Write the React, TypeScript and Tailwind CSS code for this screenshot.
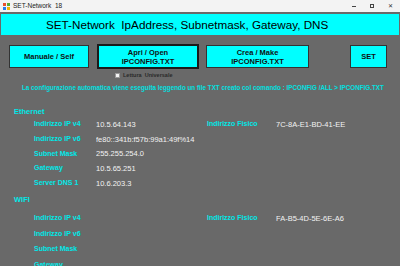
import React from "react";

const FONT = { fontFamily: '"Liberation Sans", Arial, sans-serif' };

type Row = { label: string; value?: string; macLabel?: string; mac?: string };

const ETH: Row[] = [
  { label: "Indirizzo IP v4", value: "10.5.64.143", macLabel: "Indirizzo Fisico", mac: "7C-8A-E1-BD-41-EE" },
  { label: "Indirizzo IP v6", value: "fe80::341b:f57b:99a1:49f%14" },
  { label: "Subnet Mask", value: "255.255.254.0" },
  { label: "Gateway", value: "10.5.65.251" },
  { label: "Server DNS 1", value: "10.6.203.3" },
];

const WIFI: Row[] = [
  { label: "Indirizzo IP v4", macLabel: "Indirizzo Fisico", mac: "FA-B5-4D-5E-6E-A6" },
  { label: "Indirizzo IP v6" },
  { label: "Subnet Mask" },
  { label: "Gateway" },
];

function InfoRow({ row, h }: { row: Row; h: string }) {
  return (
    <div className={`flex items-center ${h}`}>
      <div className="w-[34px] shrink-0" />
      <div className="w-[62px] shrink-0 text-[7px] font-bold text-[#00e8e8] whitespace-nowrap">{row.label}</div>
      <div className="w-[111px] shrink-0 text-[7.5px] text-[#f2f2f2] whitespace-nowrap overflow-hidden">{row.value}</div>
      <div className="w-[69px] shrink-0 text-[7px] font-bold text-[#00e8e8] whitespace-nowrap">{row.macLabel}</div>
      <div className="text-[7.5px] text-[#f2f2f2] whitespace-nowrap">{row.mac}</div>
    </div>
  );
}

function Btn({ children, w, focused }: { children: React.ReactNode; w: string; focused?: boolean }) {
  return (
    <button
      className={`${w} h-[23px] bg-[#00ffff] flex flex-col items-center justify-center text-[7.5px] leading-[9px] font-bold text-[#111] ${
        focused ? "border-2 border-[#1a1a1a] h-[25px]" : "border border-[#333]"
      }`}
    >
      {children}
    </button>
  );
}

export default function App() {
  return (
    <div className="w-[400px] h-[266px] overflow-hidden bg-[#696969] flex flex-col" style={FONT}>
      {/* window title bar */}
      <div className="h-[12px] bg-[#f3f3f3] flex items-center shrink-0">
        <div className="ml-[3px] w-[7px] h-[7px] grid grid-cols-2 gap-[1px]">
          <span className="bg-[#e8502a]" />
          <span className="bg-[#5aa832]" />
          <span className="bg-[#2a7ae8]" />
          <span className="bg-[#f2b400]" />
        </div>
        <span className="ml-[3px] text-[6.5px] text-[#222]">SET-Network&nbsp; 18</span>
        <div className="ml-auto flex items-center gap-[14px] mr-[7px] text-[#333]">
          <span className="w-[4px] h-[1px] bg-[#444]" />
          <span className="w-[4px] h-[4px] border border-[#444]" />
          <span className="text-[6px] leading-none">✕</span>
        </div>
      </div>

      {/* header */}
      <div className="mt-[2px] mx-[1px] h-[21px] bg-[#00ffff] flex items-center shrink-0">
        <span className="ml-[45px] text-[11.7px] text-black whitespace-nowrap">
          SET-Network&nbsp; IpAddress, Subnetmask, Gateway, DNS
        </span>
      </div>

      {/* buttons */}
      <div className="flex items-start mt-[10px] h-[23px] shrink-0">
        <div className="ml-[9px]">
          <Btn w="w-[80px]">Manuale / Self</Btn>
        </div>
        <div className="ml-[8px] -mt-[1px] flex flex-col items-center">
          <Btn w="w-[102px]" focused>
            <span>Apri / Open</span>
            <span>IPCONFIG.TXT</span>
          </Btn>
        </div>
        <div className="ml-[7px]">
          <Btn w="w-[103px]">
            <span>Crea / Make</span>
            <span>IPCONFIG.TXT</span>
          </Btn>
        </div>
        <div className="ml-[41px]">
          <Btn w="w-[37px]">SET</Btn>
        </div>
      </div>

      {/* checkbox */}
      <div className="flex items-center h-[10px] mt-[2px] shrink-0">
        <span className="ml-[115px] w-[5px] h-[5px] bg-[#f4f4f4] border border-[#999]" />
        <span className="ml-[3px] text-[5.5px] font-bold text-[#2a2a2a] whitespace-nowrap">Lettura&nbsp; Universale</span>
      </div>

      {/* info */}
      <div className="h-[10px] mt-[3px] flex items-center shrink-0">
        <span className="ml-[22px] text-[6.3px] font-bold text-[#00e0e0] whitespace-nowrap">
          La configurazione automatica viene eseguita leggendo un file TXT creato col comando : IPCONFIG /ALL &gt; IPCONFIG.TXT
        </span>
      </div>

      {/* ethernet */}
      <div className="h-[12px] mt-[13px] flex items-center shrink-0">
        <span className="ml-[14px] text-[7.5px] font-bold text-[#00e8e8]">Ethernet</span>
      </div>
      <div className="flex flex-col mt-[-1px] shrink-0">
        {ETH.map((r) => (
          <InfoRow key={r.label} row={r} h="h-[14.75px]" />
        ))}
      </div>

      {/* wifi */}
      <div className="h-[12px] mt-[3px] flex items-center shrink-0">
        <span className="ml-[14px] text-[7.5px] font-bold text-[#00e8e8]">WIFI</span>
      </div>
      <div className="flex flex-col mt-[5px] shrink-0">
        {WIFI.map((r) => (
          <InfoRow key={r.label} row={r} h="h-[15.5px]" />
        ))}
      </div>
    </div>
  );
}
